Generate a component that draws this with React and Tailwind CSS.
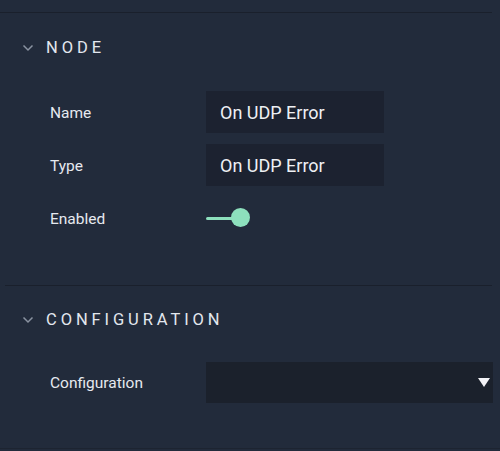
import { useState } from "react";

function Chevron() {
  return (
    <svg width="12" height="8" viewBox="0 0 12 8" className="shrink-0">
      <polyline points="1.5,1.5 6,6 10.5,1.5" fill="none" stroke="#8a93a1" strokeWidth="1.5" />
    </svg>
  );
}

function SectionHeader({ title }) {
  return (
    <div className="flex items-center h-[20px] pl-[22px] gap-[12px]">
      <Chevron />
      <span className="text-[16.5px] tracking-[3.9px] text-[#e3e7ee] leading-none">{title}</span>
    </div>
  );
}

function Row({ label, children }) {
  return (
    <div className="flex items-center">
      <div className="w-[206px] shrink-0 pl-[50px] pt-[3px] text-[15.5px] text-[#e6e9ef]">{label}</div>
      {children}
    </div>
  );
}

function TextBox({ value }) {
  return (
    <div className="w-[178px] h-[42px] bg-[#1c2230] flex items-center pl-[14px] text-[18px] text-[#eef0f4]">
      {value}
    </div>
  );
}

export default function App() {
  const [enabled, setEnabled] = useState(true);

  return (
    <div
      className="w-[500px] h-[451px] bg-[#222b3b] overflow-hidden flex flex-col"
      style={{ fontFamily: "Roboto, 'Liberation Sans', sans-serif" }}
    >
      <div className="h-[12px]" />
      <div className="h-px w-[492px] bg-[#1a202c]" />

      {/* Node */}
      <div className="mt-[25px]">
        <SectionHeader title="NODE" />
      </div>
      <div className="mt-[33px] flex flex-col gap-[11px]">
        <Row label="Name">
          <TextBox value="On UDP Error" />
        </Row>
        <Row label="Type">
          <TextBox value="On UDP Error" />
        </Row>
        <Row label="Enabled">
          <button
            onClick={() => setEnabled((v) => !v)}
            className="relative h-[42px] w-[48px] flex items-center"
          >
            <span className="h-[3px] w-[30px] rounded-full bg-[#8de0bd]" />
            <span
              className={
                enabled
                  ? "absolute left-[25px] top-[11px] w-[19px] h-[19px] rounded-full bg-[#8de0bd]"
                  : "absolute left-0 top-[11px] w-[19px] h-[19px] rounded-full bg-[#8a93a1]"
              }
            />
          </button>
        </Row>
      </div>

      <div className="mt-[46px] ml-[5px] h-px w-[487px] bg-[#1a202c]" />

      {/* Configuration */}
      <div className="mt-[24px]">
        <SectionHeader title="CONFIGURATION" />
      </div>
      <div className="mt-[32px]">
        <Row label="Configuration">
          <div className="relative w-[287px] h-[41px] bg-[#1b212c]">
            <svg width="12" height="9" viewBox="0 0 12 9" className="absolute right-[3px] top-[16px]">
              <polygon points="0,0 12,0 6,9" fill="#f2f2f6" />
            </svg>
          </div>
        </Row>
      </div>

      <div className="mt-[45px] h-px w-[500px] bg-[#1d2431]" />
    </div>
  );
}
